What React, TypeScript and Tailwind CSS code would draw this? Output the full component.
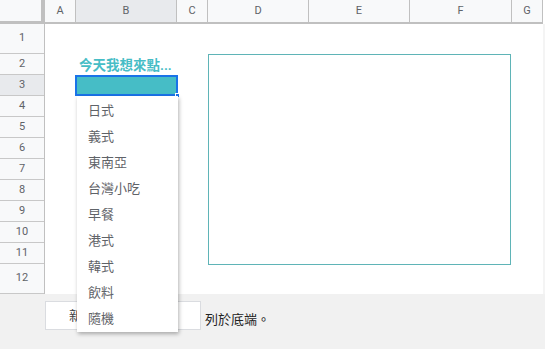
import React from "react";

const cols = [
  { l: "A", w: 31 },
  { l: "B", w: 101, sel: true },
  { l: "C", w: 31 },
  { l: "D", w: 101 },
  { l: "E", w: 101 },
  { l: "F", w: 102 },
  { l: "G", w: 31 },
];

const rows = [
  { n: 1, h: 30 },
  { n: 2, h: 21 },
  { n: 3, h: 21, sel: true },
  { n: 4, h: 21 },
  { n: 5, h: 21 },
  { n: 6, h: 21 },
  { n: 7, h: 21 },
  { n: 8, h: 21 },
  { n: 9, h: 21 },
  { n: 10, h: 21 },
  { n: 11, h: 21 },
  { n: 12, h: 30 },
];

const items = ["日式", "義式", "東南亞", "台灣小吃", "早餐", "港式", "韓式", "飲料", "隨機"];

const cjk = "font-['Roboto','Noto_Sans_CJK_TC',sans-serif]";

export default function App() {
  return (
    <div className={`relative w-[545px] h-[349px] bg-[#f1f1f1] overflow-hidden ${cjk}`}>
      <div className="w-[545px] bg-white">
        {/* column header */}
        <div className="flex h-[24px]">
          <div className="w-[45px] h-[24px] bg-[#f8f9fa] border-r-4 border-b-[3px] border-[#c0c0c0]" />
          {cols.map((c) => (
            <div
              key={c.l}
              style={{ width: c.w }}
              className={`h-[24px] flex items-center justify-center text-[11px] text-[#5f6368] border-r border-b-2 border-[#c0c0c0] ${
                c.sel ? "bg-[#e8eaed]" : "bg-[#f8f9fa]"
              }`}
            >
              {c.l}
            </div>
          ))}
          <div className="w-[2px] h-[24px] bg-white" />
        </div>
        {/* body */}
        <div className="flex">
          <div className="w-[45px] flex flex-col border-r border-[#c0c0c0]">
            {rows.map((r) => (
              <div
                key={r.n}
                style={{ height: r.h }}
                className={`flex items-center justify-center text-[11px] text-[#5f6368] border-b border-[#c8c8c8] ${
                  r.sel ? "bg-[#e8eaed]" : "bg-[#f8f9fa]"
                }`}
              >
                {r.n}
              </div>
            ))}
          </div>
          <div className="relative w-[498px] flex flex-col bg-white">
            {rows.map((r) => (
              <div key={r.n} style={{ height: r.h }} className="flex">
                <div className="w-[30px]" />
                {r.n === 2 && (
                  <div className="w-[101px] pl-[4px] pt-[2px] text-[13.5px] font-bold text-[#46bdc6] whitespace-nowrap leading-[19px]">
                    今天我想來點...
                  </div>
                )}
                {r.n === 3 && (
                  <div className="relative w-[103px] h-[21px] bg-[#46bdc6] border-2 border-[#1a73e8]">
                    <div className="absolute right-[-4px] bottom-[-4px] w-[5px] h-[5px] bg-[#1a73e8] border border-white" />
                  </div>
                )}
              </div>
            ))}
            {/* chart */}
            <div className="absolute left-[163px] top-[30px] w-[303px] h-[211px] border border-[#5fb4b7] bg-white" />
          </div>
          <div className="w-[2px] bg-[#f4f4f4]" />
        </div>
      </div>
      {/* bottom bar */}
      <div className="flex items-center pl-[45px] pt-[7px]">
        <div className="w-[74px] h-[29px] bg-white border border-[#dadce0] flex items-center justify-center text-[13px] text-[#3c4043]">
          新增
        </div>
        <div className="w-[82px] h-[29px] bg-white border border-l-0 border-[#dadce0] flex items-center pl-[6px] text-[13px] text-[#3c4043]">
          1000
        </div>
        <div className="ml-[4px] pt-[8px] text-[13px] text-[#222]">列於底端。</div>
      </div>
      {/* dropdown */}
      <div className="absolute left-[77px] top-[96px] w-[101px] h-[236px] bg-white pt-[2px] shadow-[1px_2px_4px_rgba(0,0,0,0.3)]">
        {items.map((it) => (
          <div key={it} className="h-[26px] flex items-center pl-[11px] text-[13px] text-[#5f6368]">
            {it}
          </div>
        ))}
      </div>
    </div>
  );
}
